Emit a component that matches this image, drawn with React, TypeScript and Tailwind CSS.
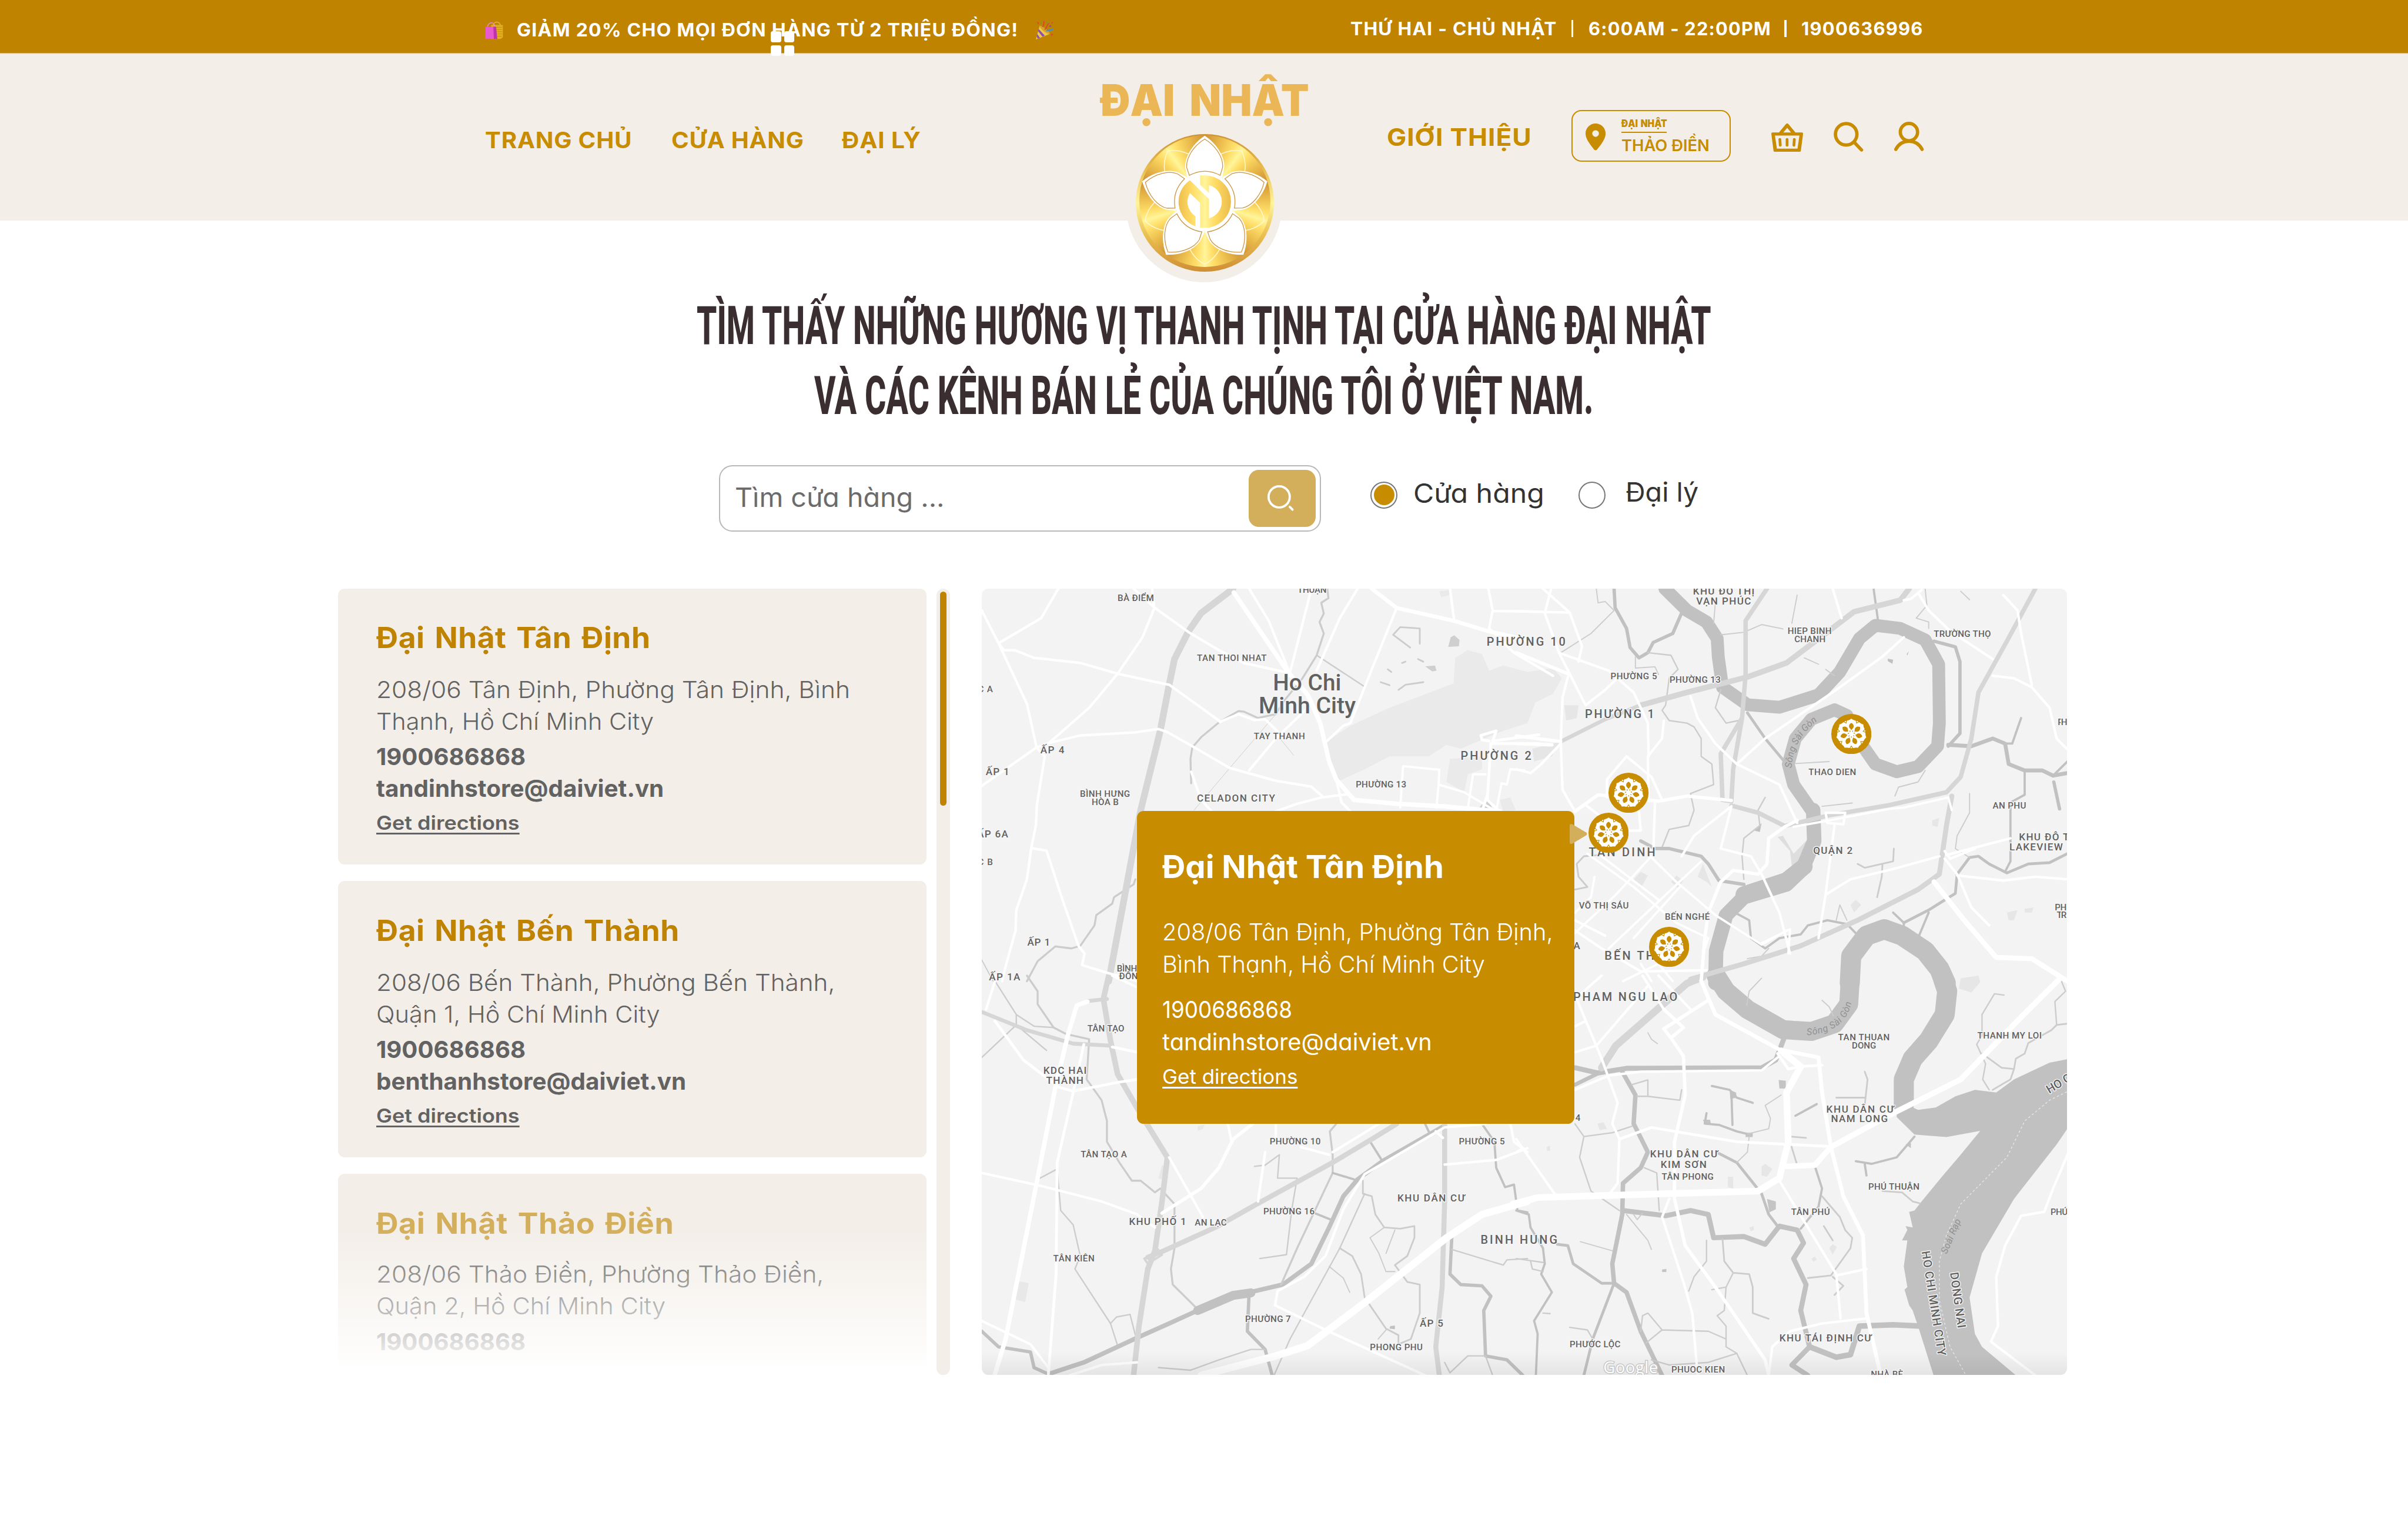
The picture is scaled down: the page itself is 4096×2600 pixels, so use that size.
import React, { useLayoutEffect, useRef, useState } from 'react';

/* Single line of text stretched horizontally to the width of its box. */
function Fit({ className, textClass = '', children }: { className: string; textClass?: string; children: React.ReactNode }) {
  const box = useRef<HTMLDivElement>(null);
  const text = useRef<HTMLSpanElement>(null);
  const [k, setK] = useState(1);
  useLayoutEffect(() => {
    const measure = () => {
      if (!box.current || !text.current) return;
      text.current.style.transform = 'none';
      const next = box.current.getBoundingClientRect().width / text.current.getBoundingClientRect().width;
      text.current.style.transform = `scaleX(${next})`;
      setK(next);
    };
    measure();
    document.fonts.ready.then(measure);
  }, []);
  return (
    <div ref={box} className={'shrink-0 whitespace-nowrap ' + className}>
      <span ref={text} className={'inline-block origin-left ' + textClass} style={{ transform: `scaleX(${k})` }}>
        {children}
      </span>
    </div>
  );
}

function BagsIcon() {
  return (
    <svg viewBox="0 0 34 34" className="h-[34px] w-[34px] shrink-0">
      <path d="M15 12C15 0 28 0 29 10" fill="none" stroke="#e8b93a" strokeWidth="1.6" />
      <path d="M12 8h21v22l-4 3H14z" fill="#e3b01f" />
      <path d="M13 12h19M13 16h19M13 20h19M13 24h19M13 28h18" stroke="#c89312" strokeWidth="1.3" />
      <path d="M5 14C5 2 18 0 19 12" fill="none" stroke="#f08ad4" strokeWidth="1.6" />
      <path d="M2 11h18l3 22H1z" fill="#e858cf" />
      <path d="M16 11h5l2 22h-6z" fill="#c033a8" />
    </svg>
  );
}

function PopperIcon() {
  return (
    <svg viewBox="0 0 34 34" className="h-[34px] w-[34px] shrink-0">
      <path d="M8 9L26 24L1 34z" fill="#f0c848" />
      <path d="M6 15l11 12-4 2L5 19zM3.500 24l5 7-4 1.500-2-4z" fill="#8a4fb0" />
      <path d="M8 9c4 0 18 10 18 15-5 1-19-10-18-15z" fill="#d9a02a" />
      <path d="M13 11c4-3 1-6 3-10M17 16c5-3 2-8 8-11" fill="none" stroke="#d8453b" strokeWidth="2" />
      <path d="M20 19c4-4 6 1 12-4" fill="none" stroke="#3d8fd6" strokeWidth="2.500" />
      <path d="M3 2l4 2-2 3zM29 2l3 1-2 3zM28 23l4 2-3 3z" fill="#d8453b" />
      <path d="M21 2l2 2-2 2zM10 3l2 2-2 1z" fill="#4ba35a" />
      <circle cx="27" cy="10" r="1.700" fill="#7a4fc0" />
    </svg>
  );
}

function GridIcon() {
  return (
    <div className="absolute left-[1383px] top-[56px] grid grid-cols-2 gap-x-[5px] gap-y-[6px]">
      <div className="h-[19.500px] w-[18.500px] rounded-[4px] bg-white" />
      <div className="h-[19.500px] w-[18.500px] rounded-[4px] bg-white" />
      <div className="h-[18.500px] w-[18.500px] rounded-[4px] bg-white" />
      <div className="h-[18.500px] w-[18.500px] rounded-[4px] bg-white" />
    </div>
  );
}

function PinIcon() {
  return (
    <svg viewBox="0 0 36 48" className="h-[48px] w-[36px] shrink-0" fill="#C88C00">
      <path
        fillRule="evenodd"
        d="M18 0C8 0 0 8 0 18c0 8 5 16 15.500 29 1.500 1.500 3.500 1.500 5 0C31 34 36 26 36 18 36 8 28 0 18 0zm0 12a6 6 0 1 1 0 12 6 6 0 0 1 0-12z"
      />
    </svg>
  );
}

function BasketIcon() {
  return (
    <svg viewBox="0 0 57 51" className="h-[51px] w-[57px] shrink-0" fill="none" stroke="#C88C00">
      <path d="M16 18L28.500 3L41 18" strokeWidth="6" strokeLinejoin="round" />
      <path
        fill="#C88C00"
        stroke="none"
        fillRule="evenodd"
        d="M2 16H55Q57 16 57 18.500L53 49Q52.500 51 50.500 51H6.500Q4.500 51 4 49L0 18.500Q0 16 2 16zM6.500 21.500L10 45H47L50.500 21.500z"
      />
      <path d="M15.300 28.500l.8 10.500M28.300 28.500v10.500M41.300 28.500l-.8 10.500" strokeWidth="5" strokeLinecap="round" />
    </svg>
  );
}

function SearchIcon() {
  return (
    <svg viewBox="0 0 54 54" className="h-[54px] w-[54px] shrink-0" fill="none" stroke="#C88C00" strokeWidth="6" strokeLinecap="round">
      <circle cx="22.500" cy="22.500" r="19.300" />
      <path d="M37 37L50 50.500" />
    </svg>
  );
}

function UserIcon() {
  return (
    <svg viewBox="0 0 54 54" className="h-[54px] w-[54px] shrink-0" fill="none" stroke="#C88C00" strokeWidth="6" strokeLinecap="round">
      <circle cx="26.500" cy="18.500" r="15.500" />
      <path d="M3 49.500C8 40 16 35 26.500 35S45 40 50 49.500" />
    </svg>
  );
}

const FIVE = [0, 72, 144, 216, 288];

function Emblem() {
  return (
    <div className="relative flex h-[280px] w-[280px] items-start justify-center rounded-full bg-[#F3EEE8]">
      <div className="ml-[3px] mt-[14px] flex h-[247.500px] w-[247.500px] items-start justify-center rounded-full bg-[linear-gradient(180deg,#CE9237,#E8BC4E_25%,#FFF59A_50%,#E8BC4E_75%,#CF8E35)]">
        <div className="mt-[3px] h-[236px] w-[236px] rounded-full bg-[conic-gradient(#CE9237_0deg,#E9B94A_14deg,#FFDF6A_28deg,#FFF59A_36deg,#FFDF6A_44deg,#E9B94A_58deg,#CE9237_72deg,#E9B94A_86deg,#FFDF6A_100deg,#FFF59A_108deg,#FFDF6A_116deg,#E9B94A_130deg,#CE9237_144deg,#E9B94A_158deg,#FFDF6A_172deg,#FFF59A_180deg,#FFDF6A_188deg,#E9B94A_202deg,#CE9237_216deg,#E9B94A_230deg,#FFDF6A_244deg,#FFF59A_252deg,#FFDF6A_260deg,#E9B94A_274deg,#CE9237_288deg,#E9B94A_302deg,#FFDF6A_316deg,#FFF59A_324deg,#FFDF6A_332deg,#E9B94A_346deg,#CE9237_360deg)]" />
      </div>
      <svg viewBox="414 480 742.500 742.500" className="absolute left-[18px] top-[14px] h-[247.500px] w-[247.500px]">
        <defs>
          <linearGradient id="nd" x1="0" x2="1" y1="0" y2="0">
            <stop offset="0" stopColor="#EDBE4C" />
            <stop offset="0.250" stopColor="#FFDB64" />
            <stop offset="0.500" stopColor="#FFF59A" />
            <stop offset="0.700" stopColor="#FFDB64" />
            <stop offset="1" stopColor="#E9BC4C" />
          </linearGradient>
        </defs>
        {FIVE.map((a) => (
          <path
            key={a}
            transform={`rotate(${a + 36} 785 843)`}
            d="M690 645C690 590 735 530 785 506C835 530 880 590 880 645"
            fill="none"
            stroke="#FFF8CF"
            strokeWidth="5"
          />
        ))}
        {FIVE.map((a) => (
          <g key={a} transform={`rotate(${a} 785 843)`}>
            <path d="M785 489C715 535 675 610 680 660L690 712H880L890 660C895 610 855 535 785 489z" fill="#fff" />
            <path
              d="M785 507C722 545 684 610 688 660L702 702Q785 658 868 702L881 660C886 610 848 545 785 507z"
              fill="#fff"
              stroke="#CB9440"
              strokeWidth="4"
            />
          </g>
        ))}
        <circle cx="785" cy="843" r="158" fill="#fff" />
        <path
          d="M705 728L808 830V933A92 92 0 0 0 808 755V797L760 752V702H785A141.500 141.500 0 0 1 785 985H760V850L705 797A92 92 0 0 0 735 922V977A142 142 0 0 1 705 728z"
          fill="url(#nd)"
        />
      </svg>
    </div>
  );
}

type Road = [string, number];

const TA = 'translate(1740 1040) scale(0.63776 0.45918)';
const TB = 'translate(2720 1040) scale(0.63776 0.45918)';
const TC = 'translate(1740 1750) scale(0.63776 0.46556)';
const TD = 'translate(2720 1750) scale(0.63776 0.46556)';

const WATER: Record<string, Road[]> = {
  [TA]: [
    ['M1005 35L1008 72L988 90L995 132L983 165L995 210L975 295L935 385L885 470L860 525L810 540L770 515L755 513L702 555L650 615L625 655L620 700L622 795', 3.5],
    ['M975 295L1110 418', 2.5],
    ['M860 525L740 720L630 900M860 600L910 685', 1],
    ['M465 1170L460 1190L405 1240L400 1265L355 1310L350 1350L310 1430L285 1440L240 1432L190 1490L160 1568', 3.5],
    ['M33 1485L65 1568', 2],
    ['M1190 215L1210 185L1265 190L1265 250M1190 215L1238 265M1155 400L1180 412M1205 430L1225 410L1275 400M1260 310L1275 320M1175 350L1185 360M1215 325L1225 320', 3],
  ],
  [TB]: [
    ['M418 35L480 120L535 165L565 230L568 300L580 420L650 488L740 498L850 450L910 360L965 230L1010 178L1080 190L1150 235L1188 330L1190 560L1185 650L1130 730L1070 750L1010 720L970 640L930 530L895 508L830 545L785 620L765 720L780 800L835 910', 23],
    ['M835 900L838 1020L805 1130L760 1190L640 1240L590 1310L562 1450L560 1575', 26],
    ['M640 1230L760 1175L810 1120', 30],
    ['M938 1575L942 1470L985 1390L1035 1365L1085 1390L1150 1450L1190 1520L1208 1575', 36],
    ['M275 35L278 110L310 190L320 265L345 305L370 285L385 245L440 210L465 130', 6],
    ['M225 35L230 90L250 85L275 120L210 210L125 285', 2],
    ['M370 285L435 295L455 350L430 385L420 490L410 510L430 550L480 560L500 575L520 620L520 690L550 720L555 800L490 835L500 900L485 960L430 975L410 1045', 2.5],
    ['M335 300L335 345L390 340L400 370', 2],
    ['M1005 35L1018 165', 4],
    ['M1175 240L1235 262L1248 320L1248 600L1215 650', 6],
    ['M1215 645L1280 650L1340 620L1375 640L1385 720L1430 745L1480 745L1510 765L1550 755', 7],
    ['M1375 640L1395 640L1420 540M1430 750L1430 840L1390 870L1390 1100L1375 1140M1510 765L1550 710', 4],
    ['M1512 790L1528 895', 6],
    ['M1550 1070L1500 1105L1440 1110L1380 1145L1330 1110L1300 1080L1275 1085L1240 1150L1235 1225L1160 1290L1090 1340', 5],
    ['M1275 1085L1235 1050L1240 1000L1275 910L1275 835', 2],
    ['M1160 1300L1130 1400M1090 1340L1090 1390M1060 1300L1090 1340', 4],
    ['M650 520L700 620L760 720', 5],
    ['M575 430L560 500L590 560L625 550', 2.5],
    ['M165 1210L200 1200L175 1160L170 1110L190 1080L235 1075', 3],
    ['M350 1020L390 1050L430 1050L520 1080L540 1110L570 1175L640 1190', 6],
    ['M615 1300L655 1330L660 1400L700 1440L740 1400L800 1385L820 1350L875 1330L930 1345L965 1395', 4],
    ['M900 1330L910 1270L930 1330M650 1480L690 1470L710 1440', 2],
    ['M1150 35L1155 100L1125 150L1160 165L1160 190M1250 45L1275 78M790 60L775 170M560 90L555 170M575 215L640 205L690 175L750 192', 2],
    ['M640 1170L635 1080L640 1010L685 960L680 900L700 850', 2.5],
    ['M960 1110L980 1125L1060 1100L1062 1050M1030 1110L1028 1160L1015 1240', 3],
    ['M785 718L880 710M1150 745L1130 790L1075 810L1065 845M810 305L850 330M870 350L895 375M860 885L945 872', 2],
  ],
  [TC]: [
    ['M160 0L190 60L190 110L235 200L270 225L335 245L328 400L370 480L385 560L385 640L420 720L455 790L480 790L520 835L535 820L575 880L575 1050L565 1130L570 1190L640 1285', 3.5],
    ['M33 315L130 190L130 150L180 195L235 200M65 10L130 150M130 190L215 288', 2.5],
    ['M190 785L245 745L255 905L290 960L310 1080L295 1130L395 1340L415 1425M395 1340L412 1315L450 1305L465 1385', 2.5],
    ['M220 1535L320 1490L470 1395L560 1340L640 1290L740 1235L880 1190L960 1110L1010 970L1050 850L1090 785L1160 715L1335 578', 8],
    ['M640 1290L740 1232L790 1222', 16],
    ['M33 1370L80 1430L170 1450L180 1510L220 1535', 6],
    ['M785 1220L780 1370L830 1440L850 1540', 6],
    ['M830 1440L790 1440L700 1480L620 1520L530 1510', 2.5],
    ['M1030 571L1012 600L1020 690L1020 760L920 1050L875 1190', 3.5],
    ['M1020 760L1080 785M1128 645L1160 715M1280 571L1290 600M970 915L1015 940', 4],
    ['M1105 790L1105 840L1130 850L1140 920L1165 970L1210 975L1250 965L1250 1010L1230 1080L1195 1115L1230 1180L1265 1190L1265 1300L1240 1400L1205 1420L1205 1385L1170 1360L1110 1240L1100 1150L1075 1080L1040 1050', 3],
    ['M1110 840L1040 1050L900 1400L855 1540', 2.5],
    ['M1165 970L1125 1010L1150 1070L1170 1140L1195 1140M1195 980L1170 1070M1010 1120L1050 1165L1068 1220M1170 1365L1148 1400', 2],
    ['M1355 1010L1350 1150L1380 1190L1440 1195L1465 1235L1445 1290L1450 1465L1510 1480L1555 1540', 6],
    ['M1355 1055L1500 1115L1510 1095L1568 1090', 2.5],
    ['M1440 571L1475 640L1480 740L1505 815L1530 805L1540 905L1568 912', 4],
    ['M1450 1465L1400 1465L1350 1530L1335 1490M1450 1465L1470 1540', 2.5],
    ['M870 690L865 780L920 780L905 900L890 1075L815 1090M870 690L830 730L800 735', 2.5],
  ],
  [TD]: [
    ['M562 0L590 60L650 130L750 208L830 215L895 185L935 110L940 0', 34],
    ['M1195 -10L1212 60L1205 150L1160 250L1115 320L1090 400L1090 500', 36],
    ['M165 355L230 375L310 357L690 355L730 325L752 245', 9],
    ['M165 420L240 370', 7],
    ['M298 370L335 460L330 570L370 680L350 740L300 800L298 920L270 1110L275 1185L310 1220L350 1370L410 1540', 8],
    ['M275 1185L215 1400L190 1540', 5],
    ['M115 1035L145 1040L160 1110L240 1185L275 1185', 5],
    ['M300 905L420 925L490 905L540 920L555 1010L640 1005L700 1035L740 965L790 980L808 1030L780 1090L815 1190L800 1290L825 1430L775 1500L820 1540', 9],
    ['M825 1430L900 1470L940 1460L965 1350L1060 1345L1140 1350', 10],
    ['M570 685L620 720L690 840L710 920L735 965', 5],
    ['M0 905L35 920L40 970L75 1050L80 1110L70 1150L100 1220L50 1330L60 1380L55 1540', 4],
    ['M0 1090L75 1105M40 1100L45 1130L75 1140M75 1300L95 1302', 2.5],
    ['M165 571L190 620L270 605L325 580M190 620L178 700L210 830L290 905M360 740L395 760L402 905', 2.5],
    ['M580 1015L585 1100L610 1145L655 1150L665 1200L665 1300L710 1322', 3],
    ['M535 1020L535 1100L500 1160L485 1215M610 1145L590 1200L550 1210M590 1200L585 1290L565 1310L590 1350L590 1430L620 1455L650 1540', 2.5],
    ['M350 1370L355 1310L370 1300L410 1365L540 1370L590 1400M410 1365L365 1415M380 1480L430 1500L540 1490L620 1455M150 1355L200 1365L215 1400', 2.5],
    ['M180 1025L270 1060M310 920L370 1020L380 1055M330 920L340 940L355 915', 2],
    ['M840 735L860 820L850 890L800 975', 4],
    ['M860 850L910 930L925 980L945 1010L940 1050L885 1155L820 1165M890 1160L920 1195L895 1230', 3],
    ['M755 490L770 640L790 730L840 735M770 620L815 625', 3],
    ['M980 370L988 400L980 500M900 470L980 470', 3],
    ['M1120 620L1070 700L1000 725L955 715M980 725L985 770', 4],
    ['M1372 75L1345 70L1310 150L1310 230L1295 265L1320 340L1312 400L1330 440', 2.5],
    ['M1550 185L1520 190L1505 210L1440 260L1430 300L1405 320L1400 360L1365 355L1310 300M1400 360L1390 400L1340 440', 3],
    ['M1530 10L1545 60L1515 100L1520 190', 2.5],
    ['M550 425L600 440L620 470L665 490M605 450L608 575', 4],
    ['M650 610L620 600L570 575L530 570L535 530', 4],
    ['M650 610L710 590L715 550L700 500L745 460M655 620L650 680L620 720', 2],
    ['M325 420L370 402L370 465L460 480L465 440M340 465L370 465', 2.5],
    ['M785 540L845 495', 4],
    ['M690 10L655 60L648 115M860 95L880 120L892 155M370 220L380 245L397 262', 2],
    ['M1030 830L1085 835L1115 870L1135 877M865 965L890 1020', 3],
  ],
};

const HIGHWAYS: Record<string, Road[]> = {
  [TA]: [['M740 35L650 130L615 200L575 310L560 410L535 590L480 900L390 1568', 12]],
  [TB]: [
    ['M1105 35L1080 80L950 125L860 220L760 325L650 380L480 440L350 490', 10],
    ['M350 490L250 545L125 632', 7],
    ['M705 35L645 160L645 370L635 540L575 680L580 860L605 865L610 740L635 540', 8],
    ['M1460 35L1380 240L1300 440L1280 620L1250 770L1210 830L1050 880L880 920L755 962L680 910L605 882', 8],
    ['M1225 845L1210 960L1190 1150L1130 1210L960 1330L800 1430L640 1500L490 1560', 9],
  ],
  [TC]: [
    ['M390 0L375 90L395 250L415 380L470 510L555 700L540 870L520 1060L500 1130L475 1350L460 1540', 10],
    ['M33 140L160 210L290 262L400 270M330 98L385 90', 7],
    ['M1200 571L1130 630L1020 720L800 885L690 970L545 1060L500 1085', 9],
    ['M520 1040L540 1075L500 1110L490 1090L530 1070', 4],
    ['M1335 571L1335 870L1328 1200L1310 1430L1320 1540', 9],
  ],
  [TD]: [['M525 5L480 30L380 150L280 270L240 355', 13]],
};

const WHITES: Record<string, Road[]> = {
  [TA]: [
    ['M33 120L80 248L160 485L187 655M248 35L200 150L80 248L95 275L125 275L180 305L310 325L415 367L540 405L560 410L625 475L705 555', 4.5],
    ['M460 35L520 110L615 205L700 275L770 325L890 362M512 35L518 112L485 225L415 367L335 500L220 640', 4.5],
    ['M187 655L230 635L310 608L460 597L530 583L555 595L625 650L730 735L860 785L960 808L990 845', 4.5],
    ['M33 805L187 655L210 690L188 880L185 960L172 1048L215 1058L260 1250L305 1430L322 1460L315 1505L385 1535L470 1568M172 1048L160 1170L130 1290L128 1370L100 1510L90 1568', 4.5],
    ['M742 50L895 362L950 450L985 560L1010 710L1030 780L1080 860L1200 875L1330 885L1490 905', 8],
    ['M785 35L840 160L895 350M960 35L930 200L900 362M1090 35L1040 150L975 355M950 500L860 620L785 745', 4.5],
    ['M1200 110L1130 350L1070 560L1050 570L1000 635M702 555L755 525L800 548L830 545L870 600', 4.5],
    ['M1130 35L1200 110L1360 160L1455 200L1568 235', 7],
    ['M1350 35L1362 160M1458 35L1470 120L1460 190L1530 285L1640 375M1470 122L1600 125', 4.5],
    ['M622 750L650 860L680 905M860 905L920 875L990 850L1060 838M1030 780L1045 870L1070 905', 4.5],
    ['M1460 630L1440 625L1437 608L1480 590L1470 630L1600 605M1465 640L1600 640M1465 640L1455 860L1490 905M1455 840L1440 905', 5],
    ['M1210 890L1218 728L1320 742L1318 800L1312 890M1318 800L1390 830L1480 905M1400 895L1415 760L1450 760M1480 905L1495 795L1510 800L1520 740L1560 745', 4],
  ],
  [TB]: [
    ['M0 285L150 370M0 610L125 632M0 640L100 645M165 905L230 840L400 865L480 845L605 862', 6],
    ['M0 123L150 128L185 260L175 320M98 35L80 130L120 285L195 490M75 35L150 128', 4.5],
    ['M120 285L260 355L330 440L370 560L372 690M145 380L130 460L125 632L130 820L165 905M0 740L40 755L70 720L125 640', 4.5],
    ['M195 490L250 430L280 390M415 550L410 620L370 690L372 860M310 690L255 780L255 850M310 690L380 770L410 860', 4.5],
    ['M490 455L510 540L560 640L620 720L740 800L790 950M1090 225L1030 300L900 430L700 620L620 720', 4.5],
    ['M605 885L575 1050L660 1080L690 1150L740 1300L770 1460M605 885L500 1000L465 1080', 4.5],
    ['M790 940L755 965L710 1010L705 1110L680 1150L610 1135L575 1180L540 1300L530 1400L520 1568', 6],
    ['M895 960L870 1230L850 1400M870 1230L940 1170L1060 1130L1190 1080M870 910L875 950L920 955L925 910Z', 4.5],
    ['M780 965L880 940L1050 895L1090 890L1215 850L1225 900', 4],
    ['M1130 50L1160 120L1220 200L1340 310M1340 375L1400 385L1450 420L1500 500L1520 620L1548 660M1370 60L1410 120L1420 210L1450 410M890 35L915 150M1090 80L1110 75L1140 40', 4.5],
    ['M1205 1090L1240 1150L1280 1280L1330 1350M1240 1155L1370 1175L1460 1160L1550 1170M1210 1075L1390 1010M1205 1060L1220 1090L1290 1050', 4.5],
    ['M1175 1180L1260 1330L1350 1475L1450 1480L1550 1568', 9],
    ['M200 1070L330 1200L450 1340L540 1400M240 1080L400 1250M380 1085L450 1180L560 1310L690 1425L760 1370', 4],
    ['M380 1080L280 1230L165 1380M460 1200L330 1400M520 1100L390 1270L260 1440M165 1300L210 1240L220 1160', 4],
    ['M165 1370L240 1440L350 1530L535 1525M195 880L290 980L350 980L345 905M165 1330L250 1390M390 870L385 1080', 4.5],
    ['M690 1420L770 1365L765 1460M540 1400L530 1440M300 1568L400 1500L440 1568M350 1500L380 1568', 4],
  ],
  [TC]: [
    ['M330 100L300 115L275 230L240 430L190 780L100 1400L70 1535', 8],
    ['M70 175L150 325L250 430L290 445L420 410L470 400M400 275L470 295M320 265L290 450L245 720L242 1150L220 1540', 5],
    ['M33 760L200 810L370 870L470 920L520 970M560 700L655 930M725 571L735 635M830 680L810 870', 4.5],
    ['M795 571L740 630L700 740L650 820L540 915', 6],
    ['M1330 588L1110 765L1050 900L1000 1080L940 1160L865 1215L858 1270L1000 1365L1280 1540', 4.5],
    ['M650 1540L860 1465L950 1425L1110 1260L1340 1010L1440 920L1568 870', 13],
    ['M33 1330L170 1420L220 1510M280 1540L370 1500L470 1490M1335 728L1480 710L1568 665M1335 585L1450 571', 4.5],
    ['M1520 571L1530 640L1568 680M1150 571L1020 680M930 660L1010 690M860 571L860 630M75 0L45 130M400 0L470 45M1310 600L1330 625', 4.5],
  ],
  [TD]: [
    ['M-10 880L60 855L300 845L680 830L740 780L765 640L760 450L800 350L745 290', 12],
    ['M520 20L560 150L740 285L850 315L860 450L885 660L920 850L975 1000L985 1300L1025 1540', 7],
    ['M1530 10L1420 160L1250 400L1060 530L885 660L840 730L760 735', 10],
    ['M290 630L380 585L620 640L880 658M735 300L765 360L800 350L860 345', 5],
    ['M240 320L285 490L270 570L290 630L285 800L265 835M165 440L260 385L350 370L690 365L740 310', 4.5],
    ['M415 130L470 200L435 240L415 205L540 95M435 240L470 310L475 460L445 640L445 860L475 1040L560 1200L700 1480L710 1540', 6],
    ['M430 860L410 930L470 1180L495 1300L510 1540M170 90L240 320M165 195L195 175M165 295L225 270L370 40', 4.5],
    ['M740 790L900 1150L912 1320M900 1155L985 1130M710 1540L720 1430L770 1370L860 1340L990 1320', 4.5],
    ['M1560 660L1510 820L1485 910L1420 925L1375 1040L1350 1160L1355 1350L1335 1410L1460 1540', 4.5],
    ['M0 630L110 845M0 680L20 665M355 0L415 130M400 0L490 130M165 90L240 0', 4.5],
  ],
};

const PARKS: [string, string, string][] = [
  [TA, '#EAEAEA', 'M1000 635L1070 570L1180 500L1360 405L1365 305L1400 275L1440 290L1460 355L1500 335L1568 360L1640 345L1665 385L1640 445L1590 480L1568 560L1500 590L1380 660L1340 645L1290 690L1180 690L1110 740L1040 785L1020 760Z'],
  [TA, '#EAEAEA', 'M1350 700L1440 690L1440 740L1400 760L1390 830L1340 790ZM1320 45L1348 40L1348 60L1325 68ZM1490 860L1520 850L1535 900L1500 905Z'],
  [TA, '#CFCFCF', 'M1352 225L1362 217L1377 235L1375 260L1345 262ZM1280 338L1308 335L1312 355L1300 358ZM1430 895L1455 850L1470 895Z'],
  [TB, '#E6E6E6', 'M45 660L125 632L100 690L50 710ZM135 490H175L170 540L140 550ZM330 1170L350 1140L370 1155L350 1205ZM435 1180L450 1155L470 1175L455 1205ZM1170 940L1190 930L1185 965L1170 960ZM940 1270L955 1250L970 1270L950 1300ZM1380 1300L1410 1290L1400 1330L1385 1330ZM1430 1285L1455 1280L1450 1300L1430 1300ZM525 1110L550 1200L535 1180L510 1160Z'],
  [TB, '#DEDEDE', 'M735 1005L770 1060L775 1120L765 1140L800 1130L820 1060L815 1020L780 1070L750 1000Z'],
  [TB, '#C1C1C1', 'M670 980L690 950L685 985ZM1045 308L1060 312L1058 328L1045 318ZM1098 290L1104 280L1100 296Z'],
  [TC, '#E8E8E8', 'M128 1175L165 1185L155 1258L118 1245ZM540 730L550 735L540 785L530 780ZM640 580L660 575L655 590L640 598Z'],
  [TC, '#C1C1C1', 'M1182 1350L1195 1348L1195 1362L1180 1360Z'],
  [TD, '#E6E6E6', 'M228 570L245 565L255 590L235 595ZM595 775L610 775L610 820L595 815ZM690 735L700 725L720 745L705 775L690 770ZM655 970L668 965L668 980L660 985ZM830 1090L840 1082L845 1095L835 1102ZM880 1050L890 1035L902 1045L890 1075ZM1250 10L1300 0L1305 25L1280 65L1245 50ZM85 660L95 655L95 675L87 675Z'],
  [TD, '#C4C4C4', 'M738 402L758 405L758 435L740 435ZM705 860L730 870L730 900L712 912ZM600 440L618 450L620 470L602 475ZM525 555L545 555L548 575L530 572ZM410 1132L422 1130L422 1142L410 1142ZM1095 650L1110 645L1110 665ZM645 605H665V622H645Z'],
  [TD, '#C1C1C1', 'M1070 480L1130 517L1180 508L1235 465L1290 440L1350 450L1400 400L1500 335L1565 318L1565 560L1520 650L1400 860L1310 1070L1275 1240L1290 1380L1310 1430L1410 1545H1175L1130 1350L1115 1290L1105 1270L1092 1210L1100 1200L1090 1120L1100 1020L1085 1020L1100 980L1095 965L1115 970L1105 910L1120 905L1140 870L1200 770L1250 690L1305 598L1210 622L1120 612L1070 545Z'],
];

type Label = [string, number, number, number, number];

const LABELS: Record<string, Label[]> = {
  A: [
    ['BÀ ĐIỂM', 415, 517, 82, 16],
    ['THUẬN', 921, 1003, 52, 16],
    ['PHƯỜNG 10', 1453, 1675, 258, 21],
    ['TAN THOI NHAT', 638, 834, 318, 16],
    ['Ho Chi', 852, 1044, 432, 40],
    ['Minh City', 812, 1085, 522, 40],
    ['C A', 22, 64, 440, 16],
    ['TAY THANH', 798, 942, 622, 16],
    ['ẤP 4', 198, 265, 679, 18],
    ['ẤP 1', 44, 110, 762, 18],
    ['PHƯỜNG 2', 1380, 1579, 704, 21],
    ['PHƯỜNG 13', 1085, 1227, 812, 16],
    ['BÌNH HƯNG', 309, 450, 848, 16],
    ['HÒA B', 342, 418, 880, 16],
    ['CELADON CITY', 638, 858, 867, 18],
    ['ẤP 6A', 20, 107, 1006, 18],
    ['C B', 22, 64, 1115, 16],
    ['ẤP 1', 161, 225, 1428, 18],
    ['ẤP 1A', 53, 141, 1564, 18],
    ['BÌNH', 413, 470, 1531, 16],
    ['ĐÔNG', 419, 490, 1561, 16],
  ],
  B: [
    ['KHU ĐÔ THỊ', 497, 670, 58, 18],
    ['VẠN PHÚC', 506, 660, 96, 18],
    ['HIEP BINH', 763, 887, 212, 16],
    ['CHANH', 782, 870, 244, 16],
    ['TRƯỜNG THỌ', 1174, 1335, 224, 16],
    ['PHƯỜNG 5', 265, 396, 388, 16],
    ['PHƯỜNG 13', 431, 575, 402, 16],
    ['PHƯỜNG 1', 193, 388, 541, 21],
    ['PH', 1523, 1550, 568, 16],
    ['THAO DIEN', 822, 956, 764, 16],
    ['AN PHU', 1340, 1434, 894, 16],
    ['KHU ĐÔ THỊ', 1414, 1587, 1018, 18],
    ['LAKEVIEW', 1387, 1537, 1056, 18],
    ['TAN DINH', 204, 391, 1080, 21],
    ['QUẬN 2', 835, 946, 1070, 18],
    ['VÕ THỊ SÁU', 176, 316, 1284, 16],
    ['BẾN NGHÉ', 418, 544, 1328, 16],
    ['BẾN TH', 248, 388, 1484, 21],
    ['A', 161, 175, 1443, 18],
    ['PH', 1515, 1548, 1291, 16],
    ['TR', 1520, 1548, 1321, 16],
  ],
  C: [
    ['TÂN TẠO', 330, 434, 216, 16],
    ['KDC HAI', 206, 328, 378, 18],
    ['THÀNH', 214, 319, 416, 18],
    ['PHƯỜNG 10', 843, 986, 651, 16],
    ['PHƯỜNG 5', 1375, 1504, 651, 16],
    ['TÂN TẠO A', 311, 441, 700, 16],
    ['KHU DÂN CƯ', 1202, 1392, 870, 18],
    ['PHƯỜNG 16', 825, 969, 920, 16],
    ['KHU PHỐ 1', 447, 608, 960, 18],
    ['AN LẠC', 632, 722, 962, 16],
    ['BINH HUNG', 1436, 1652, 1033, 21],
    ['TÂN KIÊN', 234, 350, 1102, 16],
    ['PHƯỜNG 7', 774, 902, 1335, 16],
    ['ẤP 5', 1265, 1331, 1352, 18],
    ['PHONG PHU', 1125, 1273, 1442, 16],
  ],
  D: [
    ['PHAM NGU LAO', 160, 453, 97, 21],
    ['TAN THUAN', 905, 1050, 249, 16],
    ['DONG', 944, 1012, 280, 16],
    ['THANH MY LOI', 1297, 1478, 242, 16],
    ['KHU DÂN CƯ', 872, 1062, 527, 18],
    ['NAM LONG', 885, 1045, 564, 18],
    ['4', 166, 178, 560, 16],
    ['KHU DÂN CƯ', 376, 567, 701, 18],
    ['KIM SƠN', 406, 535, 740, 18],
    ['TÂN PHONG', 409, 555, 785, 16],
    ['PHÚ THUẬN', 990, 1134, 824, 16],
    ['TÂN PHÚ', 773, 882, 922, 16],
    ['PHÚ', 1503, 1551, 922, 16],
    ['KHU TÁI ĐỊNH CƯ', 740, 999, 1410, 18],
    ['PHƯỚC LỘC', 150, 293, 1432, 16],
    ['PHUOC KIEN', 436, 587, 1530, 16],
    ['NHÀ BÈ', 997, 1088, 1548, 16],
  ],
};

const ORIGIN: Record<string, [number, number, number]> = {
  A: [1740, 1040, 0.45918],
  B: [2720, 1040, 0.45918],
  C: [1740, 1750, 0.46556],
  D: [2720, 1750, 0.46556],
};

function Strokes({ sets, color, thinColor }: { sets: Record<string, Road[]>; color: string; thinColor: string }) {
  return (
    <g fill="none" strokeLinecap="round" strokeLinejoin="round">
      {Object.entries(sets).map(([t, roads]) => (
        <g key={t} transform={t}>
          {roads.map(([d, w]) => (
            <path key={d} d={d} stroke={w < 4 ? thinColor : color} strokeWidth={w} vectorEffect="non-scaling-stroke" />
          ))}
        </g>
      ))}
    </g>
  );
}

function CityMap() {
  return (
    <svg viewBox="1761 1056 1947 1410" className="block h-[1410px] w-[1947px]">
      <defs>
        <path id="river-a" d="M3214 1378Q3216 1325 3262 1292" />
        <path id="river-b" d="M3241 1857Q3312 1852 3322 1795" />
        <linearGradient id="foot" x1="0" x2="0" y1="0" y2="1">
          <stop offset="0" stopColor="#000" stopOpacity="0" />
          <stop offset="1" stopColor="#000" stopOpacity="0.060" />
        </linearGradient>
      </defs>
      <rect x="1761" y="1056" width="1947" height="1410" fill="#F3F3F3" />
      {PARKS.map(([t, fill, d]) => (
        <path key={d} transform={t} fill={fill} d={d} />
      ))}
      <Strokes sets={WATER} color="#C1C1C1" thinColor="#CCCCCC" />
      <Strokes sets={HIGHWAYS} color="#D6D6D6" thinColor="#D6D6D6" />
      <Strokes sets={WHITES} color="#FFFFFF" thinColor="#FFFFFF" />
      <path
        transform={TD}
        d="M1560 440L1500 480L1430 560L1380 700L1250 880L1210 1000L1190 1100L1190 1250L1220 1430L1265 1540"
        fill="none"
        stroke="#E6E6E6"
        strokeWidth="1.500"
        strokeDasharray="4 4"
        vectorEffect="non-scaling-stroke"
      />
      <rect x="1761" y="2426" width="1947" height="40" fill="url(#foot)" />
      <g fontFamily="Roboto, sans-serif" fontWeight="500" fill="#616161" stroke="#F6F6F6" strokeWidth="3" paintOrder="stroke" strokeLinejoin="round">
        {Object.entries(LABELS).map(([q, items]) =>
          items.map(([text, x0, x1, y, size]) => (
            <text
              key={q + text + y}
              x={ORIGIN[q][0] + x0 * 0.63776}
              y={ORIGIN[q][1] + y * ORIGIN[q][2]}
              fontSize={size}
              textLength={(x1 - x0) * 0.63776}
              lengthAdjust={size === 40 ? 'spacingAndGlyphs' : 'spacing'}
            >
              {text}
            </text>
          )),
        )}
        <text transform="translate(3447 2245) rotate(81)" fontSize="21" textLength="190">HO CHI MINH CITY</text>
        <text transform="translate(3498 2283) rotate(82)" fontSize="21" textLength="101">DONG NAI</text>
        <text transform="translate(3676 1962) rotate(-31)" fontSize="21">HO CHI MINH CITY</text>
      </g>
      <g fontFamily="Roboto, sans-serif" fontStyle="italic" fontSize="17" fill="#929292">
        <text><textPath href="#river-a" textLength="100">Sông Sài Gòn</textPath></text>
        <text><textPath href="#river-b" textLength="108">Sông Sài Gòn</textPath></text>
        <text transform="translate(3492 2250) rotate(-67)" textLength="66">Soài Rạp</text>
      </g>
      <text x="2876" y="2463" fontFamily="Open Sans, sans-serif" fontSize="29" fill="#FFFFFF" stroke="#C4C4C4" strokeWidth="3" paintOrder="stroke" textLength="98">
        Google
      </text>
    </svg>
  );
}

const SEVEN = [0, 1, 2, 3, 4, 5, 6].map((i) => (i * 360) / 7);

function Marker({ className }: { className: string }) {
  return (
    <svg viewBox="-36 -36 72 72" className={'absolute h-[72px] w-[72px] ' + className}>
      <circle r="36" fill="#C88C00" />
      {SEVEN.map((a) => (
        <g key={a} transform={`rotate(${a})`}>
          <path
            fill="#fff"
            fillRule="evenodd"
            d="M0 -27.500L-3 -25.500L-8 -24L-9 -18L-4 -7L0 -3.500L4 -7L9 -18L8 -24L3 -25.500ZM0 -20C3 -18.500 4.500 -16 4.200 -13C4 -10.500 1.500 -9.500 0 -7C-1.500 -9.500 -4 -10.500 -4.200 -13C-4.500 -16 -3 -18.500 0 -20Z"
          />
          <circle cy="-24.500" r="1.300" fill="#fff" transform="rotate(25.700)" />
          <circle cy="-5.800" r="0.900" fill="#C88C00" transform="rotate(25.700)" />
        </g>
      ))}
      <circle r="4.500" fill="#fff" />
    </svg>
  );
}

type Store = {
  name: string;
  nameW: string;
  lines: [string, string][];
  email: string;
  emailW: string;
  faded?: boolean;
};

const STORES: Store[] = [
  {
    name: 'Đại Nhật Tân Định',
    nameW: 'w-[492px]',
    lines: [
      ['208/06 Tân Định, Phường Tân Định, Bình', 'w-[850px]'],
      ['Thạnh, Hồ Chí Minh City', 'w-[498px]'],
    ],
    email: 'tandinhstore@daiviet.vn',
    emailW: 'w-[516px]',
  },
  {
    name: 'Đại Nhật Bến Thành',
    nameW: 'w-[544px]',
    lines: [
      ['208/06 Bến Thành, Phường Bến Thành,', 'w-[823px]'],
      ['Quận 1, Hồ Chí Minh City', 'w-[509px]'],
    ],
    email: 'benthanhstore@daiviet.vn',
    emailW: 'w-[556px]',
  },
  {
    name: 'Đại Nhật Thảo Điền',
    nameW: 'w-[534px]',
    lines: [
      ['208/06 Thảo Điền, Phường Thảo Điền,', 'w-[803px]'],
      ['Quận 2, Hồ Chí Minh City', 'w-[519px]'],
    ],
    email: 'thaodienstore@daiviet.vn',
    emailW: 'w-[556px]',
    faded: true,
  },
];

const LINK = 'underline decoration-[3px] underline-offset-[5px] [text-decoration-skip-ink:none]';

function StoreCard({ store }: { store: Store }) {
  return (
    <div className="h-[495px] w-[1056px] shrink-0 rounded-[12px] bg-[#F3EEE8] pl-[69px] pt-[58.500px] text-[42px] leading-[57px] text-[#626262]">
      <div className={store.faded ? 'text-[#D3AE5B]' : 'text-[#BF8300]'}>
        <Fit
          className={'h-[60px] text-[52px] font-bold leading-[60px] ' + store.nameW}
          textClass="tracking-[0.01em] [word-spacing:0.08em]"
        >
          {store.name}
        </Fit>
      </div>
      <div className={'flex flex-col font-light ' + (store.faded ? 'mt-[33px]' : 'mt-[35px]')}>
        {store.lines.map(([text, w]) => (
          <Fit key={text} className={'h-[57px] ' + w}>
            {text}
          </Fit>
        ))}
      </div>
      <div className={'flex flex-col font-bold ' + (store.faded ? 'mt-[8px]' : 'mt-[6px]')}>
        <Fit className="h-[57px] w-[268px]">1900686868</Fit>
        {!store.faded && <Fit className={'h-[57px] ' + store.emailW}>{store.email}</Fit>}
      </div>
      {!store.faded && (
        <Fit className="mt-[8.500px] h-[50px] w-[257px] text-[35px] font-semibold leading-[50px]" textClass={LINK}>
          Get directions
        </Fit>
      )}
    </div>
  );
}

function Popup() {
  return (
    <div className="absolute left-[279px] top-[399px] h-[561px] w-[785px] rounded-[12px] bg-[#C88C00] pl-[45px] pt-[70px] text-[42px] leading-[58px] text-white [font-feature-settings:'cv11']">
      <Fit className="h-[62px] w-[505px] text-[56px] font-bold leading-[62px]">Đại Nhật Tân Định</Fit>
      <div className="mt-[55.500px] flex flex-col font-light">
        <Fit className="h-[58px] w-[701px]">208/06 Tân Định, Phường Tân Định,</Fit>
        <Fit className="h-[58px] w-[579px]">Bình Thạnh, Hồ Chí Minh City</Fit>
      </div>
      <div className="mt-[24px] flex flex-col font-normal">
        <Fit className="h-[58px] w-[233px]">1900686868</Fit>
        <Fit className="h-[58px] w-[484px]">tandinhstore@daiviet.vn</Fit>
      </div>
      <Fit className="mt-[8px] h-[50px] w-[243px] text-[36px] leading-[50px]" textClass={LINK}>
        Get directions
      </Fit>
      <svg viewBox="0 0 32 36" className="absolute left-[776px] top-[23px] h-[36px] w-[32px]">
        <path d="M3 3L28 18L3 33z" fill="#D3AE5B" stroke="#D3AE5B" strokeWidth="6" strokeLinejoin="round" />
      </svg>
    </div>
  );
}

export default function App() {
  return (
    <div className="h-[2600px] w-[4096px] overflow-hidden bg-white">
      <div className="h-[2742px] w-[4320px] bg-white font-['Inter',sans-serif] [zoom:0.948148]">
        <div className="relative z-10 flex h-[96px] items-start border-b-[1px] border-[#DFB568] bg-[#BF8300] pl-[869px] text-[32.500px] font-bold leading-[50px] text-white">
          <div className="mt-[29px] flex h-[50px] items-center">
            <BagsIcon />
            <Fit className="ml-[24px] w-[900px]" textClass="tracking-[0.04em]">
              GIẢM 20% CHO MỌI ĐƠN HÀNG TỪ 2 TRIỆU ĐỒNG!
            </Fit>
            <div className="ml-[30px]">
              <PopperIcon />
            </div>
          </div>
          <div className="ml-[532px] mt-[26px] flex h-[50px] items-center">
            <Fit className="w-[371px]" textClass="tracking-[0.04em]">THỨ HAI - CHỦ NHẬT</Fit>
            <div className="ml-[25px] h-[31px] w-[3.500px] bg-white" />
            <Fit className="ml-[27px] w-[328px]" textClass="tracking-[0.04em]">6:00AM - 22:00PM</Fit>
            <div className="ml-[24px] h-[31px] w-[3.500px] bg-white" />
            <Fit className="ml-[27px] w-[219px]" textClass="tracking-[0.04em]">1900636996</Fit>
          </div>
          <GridIcon />
        </div>

        <header className="relative flex h-[300px] items-center bg-[#F3EEE8] pl-[870px] text-[41px] font-bold text-[#C88C00]">
          <nav className="mt-[10px] flex items-center leading-[60px]">
            <Fit className="w-[264px]" textClass="tracking-[0.02em]">TRANG CHỦ</Fit>
            <Fit className="ml-[70px] w-[238px]" textClass="tracking-[0.02em]">CỬA HÀNG</Fit>
            <Fit className="ml-[68px] w-[142px]" textClass="tracking-[0.02em]">ĐẠI LÝ</Fit>
          </nav>
          <Fit className="ml-[836px] mt-[2px] w-[260px] text-[43px] leading-[60px]" textClass="tracking-[0.02em]">
            GIỚI THIỆU
          </Fit>
          <div className="mb-[4px] ml-[71px] flex h-[93px] w-[286px] items-start rounded-[18px] border-[2.200px] border-[#C88C00] pl-[23px]">
            <div className="mt-[22px]">
              <PinIcon />
            </div>
            <div className="ml-[29px] mt-[7px] flex flex-col">
              <Fit className="h-[30px] w-[82px] text-[18px] font-black leading-[30px]" textClass="[word-spacing:0.1em]">
                ĐẠI NHẬT
              </Fit>
              <div className="h-[2px] w-[81px] bg-[#C88C00]" />
              <Fit className="h-[46px] w-[158px] text-[28.500px] font-semibold leading-[46px]">THẢO ĐIỀN</Fit>
            </div>
          </div>
          <div className="ml-[73px] mt-[2px]">
            <BasketIcon />
          </div>
          <div className="mb-[2px] ml-[55px]">
            <SearchIcon />
          </div>
          <div className="mb-[2px] ml-[54px]">
            <UserIcon />
          </div>
          <div className="absolute left-[1974px] top-[48px] flex w-[374px] flex-col items-center text-[#EAB656]">
            <Fit
              className="h-[70px] w-[374px] text-[78.500px] font-black leading-[70px]"
              textClass="[word-spacing:0.16em]"
            >
              ĐẠI NHẬT
            </Fit>
            <div className="mr-[2px] mt-[12px]">
              <Emblem />
            </div>
          </div>
        </header>

        <main className="flex flex-col">
          <h1 className="mt-[126px] flex flex-col items-center font-['Roboto',sans-serif] text-[95px] font-extrabold leading-[126px] text-[#3A2E30]">
            <Fit className="h-[126px] w-[1820px]">TÌM THẤY NHỮNG HƯƠNG VỊ THANH TỊNH TẠI CỬA HÀNG ĐẠI NHẬT</Fit>
            <Fit className="h-[126px] w-[1398px]">VÀ CÁC KÊNH BÁN LẺ CỦA CHÚNG TÔI Ở VIỆT NAM.</Fit>
          </h1>

          <div className="mt-[60px] flex h-[120px] items-start pl-[1290px] text-[47px] leading-[60px] text-[#333] [font-feature-settings:'cv11']">
            <div className="flex h-[120px] w-[1080px] items-center justify-between rounded-[24px] border-[2.200px] border-[#B8B8B8] pl-[26px] pr-[8px] text-[#6B6B6B]">
              <Fit className="-mt-[3px] w-[376px]">Tìm cửa hàng ...</Fit>
              <div className="flex h-[102px] w-[120px] items-center justify-center rounded-[18px] bg-[#D3AE5B]">
                <svg viewBox="0 0 50 50" className="mr-[4px] h-[50px] w-[50px]" fill="none" stroke="#fff" strokeWidth="4" strokeLinecap="round">
                  <circle cx="22" cy="22" r="19" />
                  <path d="M41 40L46 45" />
                </svg>
              </div>
            </div>
            <div className="ml-[89px] mt-[30px] flex h-[48px] w-[48px] items-center justify-center rounded-full border-[2.200px] border-[#777]">
              <div className="h-[37px] w-[37px] rounded-full bg-[#C88C00]" />
            </div>
            <Fit className="ml-[28px] mt-[21px] w-[235px]">Cửa hàng</Fit>
            <div className="ml-[62px] mt-[30px] h-[48px] w-[48px] rounded-full border-[2.200px] border-[#777]" />
            <Fit className="ml-[36px] mt-[19px] w-[131px]">Đại lý</Fit>
          </div>

          <div className="mt-[101.500px] flex pl-[606px]">
            <div className="relative flex h-[1410px] flex-col gap-[30px] overflow-hidden">
              {STORES.map((s) => (
                <StoreCard key={s.name} store={s} />
              ))}
              <div className="absolute bottom-0 left-0 h-[262px] w-full bg-[linear-gradient(180deg,rgba(255,255,255,0),rgba(255,255,255,0.780)_78%,#fff_97%)]" />
            </div>
            <div className="ml-[18px] flex h-[1410px] w-[24px] justify-center rounded-full bg-[#F3EEE8] pt-[6px]">
              <div className="h-[384px] w-[12px] rounded-full bg-[#BF8300]" />
            </div>
            <div className="relative ml-[57px] h-[1410px] w-[1947px]">
              <div className="overflow-hidden rounded-[12px]">
                <CityMap />
              </div>
              <Popup />
              <Marker className="left-[1125px] top-[330px]" />
              <Marker className="left-[1089px] top-[402px]" />
              <Marker className="left-[1524px] top-[225px]" />
              <Marker className="left-[1197px] top-[607px]" />
            </div>
          </div>
        </main>
      </div>
    </div>
  );
}
